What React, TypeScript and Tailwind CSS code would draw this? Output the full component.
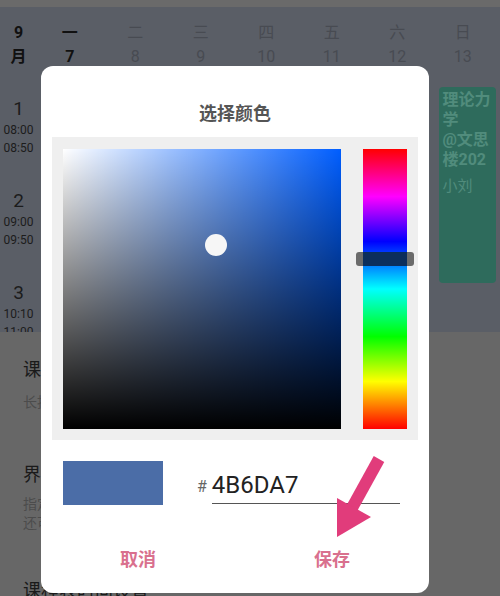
import React from 'react'

const days = [
  { name: '一', date: '7', today: true },
  { name: '二', date: '8' },
  { name: '三', date: '9' },
  { name: '四', date: '10' },
  { name: '五', date: '11' },
  { name: '六', date: '12' },
  { name: '日', date: '13' },
]

const slots = [
  { n: '1', start: '08:00', end: '08:50' },
  { n: '2', start: '09:00', end: '09:50' },
  { n: '3', start: '10:10', end: '11:00' },
]

const font = { fontFamily: 'Roboto, "Noto Sans CJK SC", sans-serif' }

const Schedule = () => (
  <div className="h-[325px] shrink-0 bg-[#5a5e66] overflow-hidden">
    <div className="grid grid-cols-[37px_repeat(7,65.5px)] h-[66px] pt-[14px]">
      <div className="flex flex-col items-center font-bold text-[#111] text-[16px] leading-[24px]">
        <span>9</span>
        <span>月</span>
      </div>
      {days.map((d) => (
        <div
          key={d.name}
          className={`flex flex-col items-center text-[16px] leading-[24px] ${
            d.today ? 'font-bold text-[#111]' : 'text-[#484b52]'
          }`}
        >
          <span>{d.name}</span>
          <span>{d.date}</span>
        </div>
      ))}
    </div>
    <div className="grid grid-cols-[37px_1fr_65.5px]">
      <div className="flex flex-col">
        {slots.map((s) => (
          <div key={s.n} className="h-[92px] flex flex-col items-center pt-[24px] text-[#1c1c1c]">
            <span className="text-[19px] leading-[24px]">{s.n}</span>
            <span className="text-[12px] leading-[18px]">{s.start}</span>
            <span className="text-[12px] leading-[18px]">{s.end}</span>
          </div>
        ))}
      </div>
      <div />
      <div className="pt-[14px] pl-[4px] pr-[4px]">
        <div className="h-[196px] rounded-[4px] bg-[#2e6b5c] px-[4px] pt-[3px] text-[#518c7c]">
          <div className="font-bold text-[16px] leading-[20px]">理论力学</div>
          <div className="font-bold text-[16px] leading-[20px]">@文思楼202</div>
          <div className="text-[15px] leading-[20px] mt-[6px]">小刘</div>
        </div>
      </div>
    </div>
  </div>
)

const Settings = () => (
  <div className="flex-1 bg-[#676767] pl-[23px] pt-[26px]">
    <div className="text-[18px] leading-[24px] text-[#1a1a1a]">课程设置</div>
    <div className="text-[14px] leading-[20px] text-[#4c4c4c] mt-[10px]">长按可以编辑</div>
    <div className="text-[18px] leading-[24px] text-[#1a1a1a] mt-[51px]">界面设置</div>
    <div className="text-[14px] leading-[19px] text-[#4c4c4c] mt-[8px]">指定背景颜色</div>
    <div className="text-[14px] leading-[19px] text-[#4c4c4c]">还可以设置透明度</div>
    <div className="text-[18px] leading-[24px] text-[#1a1a1a] mt-[46px]">课程表时间设置</div>
  </div>
)

const Arrow = () => (
  <svg className="absolute left-[296px] top-[390px]" width="60" height="86" viewBox="0 0 60 86">
    <path d="M42 3 L15 52" stroke="#e13c7b" strokeWidth="12" />
    <path d="M0 42 L34 61 L0 81 Z" fill="#e13c7b" />
  </svg>
)

const ColorDialog = () => (
  <div className="absolute left-[41px] top-[66px] w-[388px] h-[527px] bg-white rounded-[12px] flex flex-col">
    <div className="pt-[37px] text-center font-bold text-[18px] leading-[22px] text-[#555]">选择颜色</div>
    <div className="mt-[12px] mx-[11px] h-[303px] bg-[#efefef] flex p-[11px] pt-[12px] gap-[22px]">
      <div className="relative w-[278px] h-[280px] bg-[#005eff]">
        <div className="absolute inset-0 bg-gradient-to-r from-white to-transparent" />
        <div className="absolute inset-0 bg-gradient-to-b from-transparent to-black" />
        <div className="absolute left-[142px] top-[85px] w-[22px] h-[22px] rounded-full bg-[#f6f6f6]" />
      </div>
      <div className="relative w-[44px] h-[280px] bg-[linear-gradient(to_bottom,#ff0000,#ff00ff_17%,#0000ff_33%,#00ffff_50%,#00ff00_67%,#ffff00_83%,#ff0000)]">
        <div className="absolute left-[-7px] top-[103px] w-[58px] h-[14px] rounded-[3px] bg-[#6b6b6b] flex justify-center">
          <div className="w-[44px] h-full bg-[#0c2e5c]" />
        </div>
      </div>
    </div>
    <div className="flex h-[44px] mt-[21px] pl-[22px]">
      <div className="w-[100px] h-[44px] bg-[#4b6da7]" />
      <div className="ml-[34px] flex items-end pb-[1px]">
        <span className="text-[16px] leading-[26px] text-[#666] mr-[5px] mb-[4px]">#</span>
        <div className="w-[188px] border-b border-[#555] pb-[3px]">
          <span className="text-[24px] leading-[26px] text-[#222]">4B6DA7</span>
        </div>
      </div>
    </div>
    <div className="flex mt-[43px] font-bold text-[18px] leading-[24px] text-[#d9708e]">
      <div className="flex-1 text-center">取消</div>
      <div className="flex-1 text-center">保存</div>
    </div>
    <Arrow />
  </div>
)

export default function App() {
  return (
    <div className="relative w-[500px] h-[596px] overflow-hidden flex flex-col" style={font}>
      <div className="h-[7px] shrink-0 bg-[#6a6a6a]" />
      <Schedule />
      <Settings />
      <ColorDialog />
    </div>
  )
}
